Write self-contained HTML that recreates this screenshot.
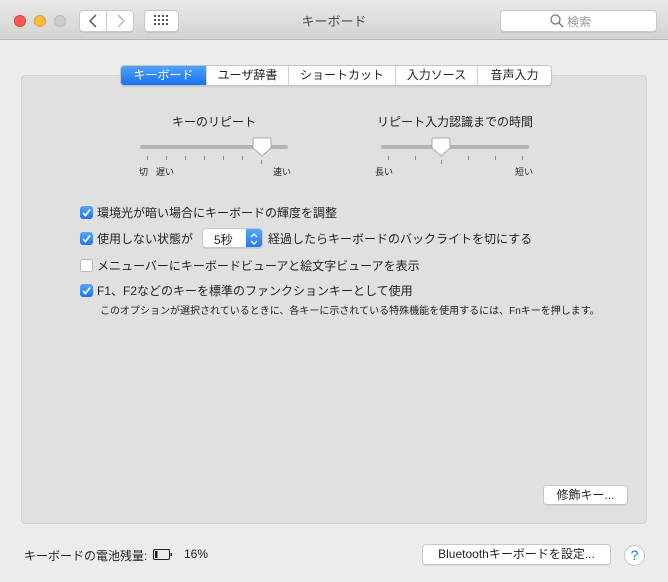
<!DOCTYPE html><html><head><meta charset="utf-8"><style>
*{box-sizing:border-box;margin:0;padding:0}
body{width:668px;height:582px;background:#ececec;font-family:"Liberation Sans","Noto Sans CJK JP",sans-serif;color:#222;position:relative;overflow:hidden;font-size:12px}
.a{position:absolute}
.tb{left:0;top:0;width:668px;height:40px;background:linear-gradient(#e8e8e8,#d3d3d3);border-bottom:1px solid #b5b5b5}
.dot{width:12px;height:12px;border-radius:50%;top:15px}
.btn{background:#fff;border:1px solid #c8c8c8;border-radius:4px;box-shadow:0 1px 0 rgba(0,0,0,.08)}
.panel{left:21px;top:75px;width:626px;height:449px;background:#e0e0e0;border:1px solid #d4d4d4;border-radius:4px}
.tabs{left:120px;top:65px;height:21px;display:flex;border:1px solid #c4c4c4;border-radius:4px;background:#fff;overflow:hidden;box-shadow:0 1px 1px rgba(0,0,0,.1)}
.tabs div{height:19px;line-height:19px;text-align:center;border-left:1px solid #d0d0d0;font-size:12px}
.tabs div.s{background:linear-gradient(#4fa3fb,#1a70f0);color:#fff;border-left:0}
.track{height:4px;background:#b4b4b4;border-radius:2px}
.tick{width:1px;height:4px;background:#888;top:156px}
.sm{font-size:9px}
.cb{width:13px;height:13px;border-radius:3px;left:80px}
.cb.on{background:linear-gradient(#57a6fb,#1f74f0)}
.cb.off{background:#fff;border:1px solid #b8b8b8}
.cb svg{position:absolute;left:2px;top:2px}
</style></head><body>
<div class="a tb"></div>
<div class="a dot" style="left:14px;background:#fc5753;border:1px solid #df3e3a"></div>
<div class="a dot" style="left:34px;background:#fdbc40;border:1px solid #de9f34"></div>
<div class="a dot" style="left:54px;background:#cdcdcd;border:1px solid #b8b8b8"></div>
<div class="a btn" style="left:79px;top:10px;width:28px;height:22px;border-radius:4px 0 0 4px"></div>
<div class="a btn" style="left:106px;top:10px;width:28px;height:22px;border-radius:0 4px 4px 0"></div>
<svg class="a" style="left:79px;top:10px" width="56" height="22"><path d="M17 5 L11 11 L17 17" stroke="#555" stroke-width="1.5" fill="none"/><path d="M39 5 L45 11 L39 17" stroke="#bbb" stroke-width="1.5" fill="none"/></svg>
<div class="a btn" style="left:144px;top:10px;width:35px;height:22px"></div>
<svg class="a" style="left:154px;top:15px" width="14" height="12" fill="#555"><rect x="0" y="0" width="2" height="2"/><rect x="4" y="0" width="2" height="2"/><rect x="8" y="0" width="2" height="2"/><rect x="12" y="0" width="2" height="2"/><rect x="0" y="4" width="2" height="2"/><rect x="4" y="4" width="2" height="2"/><rect x="8" y="4" width="2" height="2"/><rect x="12" y="4" width="2" height="2"/><rect x="0" y="8" width="2" height="2"/><rect x="4" y="8" width="2" height="2"/><rect x="8" y="8" width="2" height="2"/><rect x="12" y="8" width="2" height="2"/></svg>
<div class="a" style="left:0;width:668px;top:11px;text-align:center;font-size:13px;color:#4a4a4a">キーボード</div>
<div class="a btn" style="left:500px;top:10px;width:157px;height:22px"></div>
<svg class="a" style="left:550px;top:14px" width="14" height="14"><circle cx="5.5" cy="5.5" r="4.5" stroke="#777" stroke-width="1.3" fill="none"/><path d="M9 9 L13 13" stroke="#777" stroke-width="1.5"/></svg>
<div class="a" style="left:567px;top:13px;font-size:12px;color:#999">検索</div>
<div class="a panel"></div>
<div class="a tabs"><div class="s" style="width:85px">キーボード</div><div style="width:82px">ユーザ辞書</div><div style="width:107px">ショートカット</div><div style="width:82px">入力ソース</div><div style="width:74px">音声入力</div></div>
<div class="a" style="left:140px;width:148px;top:113px;text-align:center;font-size:12px">キーのリピート</div>
<div class="a track" style="left:140px;top:145px;width:148px"></div>
<div class="a tick" style="left:147px"></div><div class="a tick" style="left:166px"></div><div class="a tick" style="left:185px"></div><div class="a tick" style="left:204px"></div><div class="a tick" style="left:223px"></div><div class="a tick" style="left:242px"></div><div class="a tick" style="left:261px;top:160px"></div>
<svg class="a" style="left:252px;top:137px" width="20" height="22"><path d="M3 1 H17 Q19 1 19 3 V11 L10 19 L1 11 V3 Q1 1 3 1Z" fill="#fff" stroke="#aaa"/></svg>
<div class="a sm" style="left:139px;top:165px">切</div><div class="a sm" style="left:156px;top:165px">遅い</div><div class="a sm" style="left:273px;top:165px">速い</div>
<div class="a" style="left:370px;width:170px;top:113px;text-align:center;font-size:12px">リピート入力認識までの時間</div>
<div class="a track" style="left:381px;top:145px;width:148px"></div>
<div class="a tick" style="left:388px"></div><div class="a tick" style="left:415px"></div><div class="a tick" style="left:441px;top:160px"></div><div class="a tick" style="left:468px"></div><div class="a tick" style="left:495px"></div><div class="a tick" style="left:522px"></div>
<svg class="a" style="left:431px;top:137px" width="20" height="22"><path d="M3 1 H17 Q19 1 19 3 V11 L10 19 L1 11 V3 Q1 1 3 1Z" fill="#fff" stroke="#aaa"/></svg>
<div class="a sm" style="left:375px;top:165px">長い</div><div class="a sm" style="left:515px;top:165px">短い</div>

<div class="a cb on" style="top:206px"><svg width="9" height="9"><path d="M1 5 L3.5 7.5 L8 1.5" stroke="#fff" stroke-width="1.8" fill="none"/></svg></div>
<div class="a" style="left:97px;top:204px">環境光が暗い場合にキーボードの輝度を調整</div>
<div class="a cb on" style="top:232px"><svg width="9" height="9"><path d="M1 5 L3.5 7.5 L8 1.5" stroke="#fff" stroke-width="1.8" fill="none"/></svg></div>
<div class="a" style="left:97px;top:230px">使用しない状態が</div>
<div class="a btn" style="left:202px;top:228px;width:61px;height:20px;border-radius:4px;overflow:hidden"><div class="a" style="left:11px;top:2px">5秒</div><div class="a" style="right:0;top:0;width:16px;height:20px;background:linear-gradient(#57a6fb,#1f74f0)"><svg width="16" height="20"><path d="M5 8 L8 5 L11 8 M5 12 L8 15 L11 12" stroke="#fff" stroke-width="1.3" fill="none"/></svg></div></div>
<div class="a" style="left:268px;top:230px">経過したらキーボードのバックライトを切にする</div>
<div class="a cb off" style="top:259px"></div>
<div class="a" style="left:97px;top:257px">メニューバーにキーボードビューアと絵文字ビューアを表示</div>
<div class="a cb on" style="top:284px"><svg width="9" height="9"><path d="M1 5 L3.5 7.5 L8 1.5" stroke="#fff" stroke-width="1.8" fill="none"/></svg></div>
<div class="a" style="left:97px;top:282px">F1、F2などのキーを標準のファンクションキーとして使用</div>
<div class="a" style="left:100px;top:302px;font-size:10px">このオプションが選択されているときに、各キーに示されている特殊機能を使用するには、Fnキーを押します。</div>
<div class="a btn" style="left:543px;top:485px;width:85px;height:20px;text-align:center;line-height:18px">修飾キー...</div>
<div class="a" style="left:24px;top:547px">キーボードの電池残量:</div>
<svg class="a" style="left:153px;top:549px" width="20" height="11"><rect x="0.5" y="0.5" width="16" height="10" rx="1.5" fill="none" stroke="#222"/><rect x="2" y="2" width="2.5" height="7" fill="#222"/><rect x="17.5" y="4" width="1.5" height="3" fill="#222"/></svg>
<div class="a" style="left:184px;top:547px">16%</div>
<div class="a btn" style="left:422px;top:544px;width:189px;height:21px;text-align:center;line-height:19px">Bluetoothキーボードを設定...</div>
<div class="a" style="left:624px;top:545px;width:21px;height:21px;border-radius:50%;background:#fff;border:1px solid #c4c4c4;text-align:center;line-height:19px;color:#1f74f0;font-size:14px">?</div>
</body></html>
